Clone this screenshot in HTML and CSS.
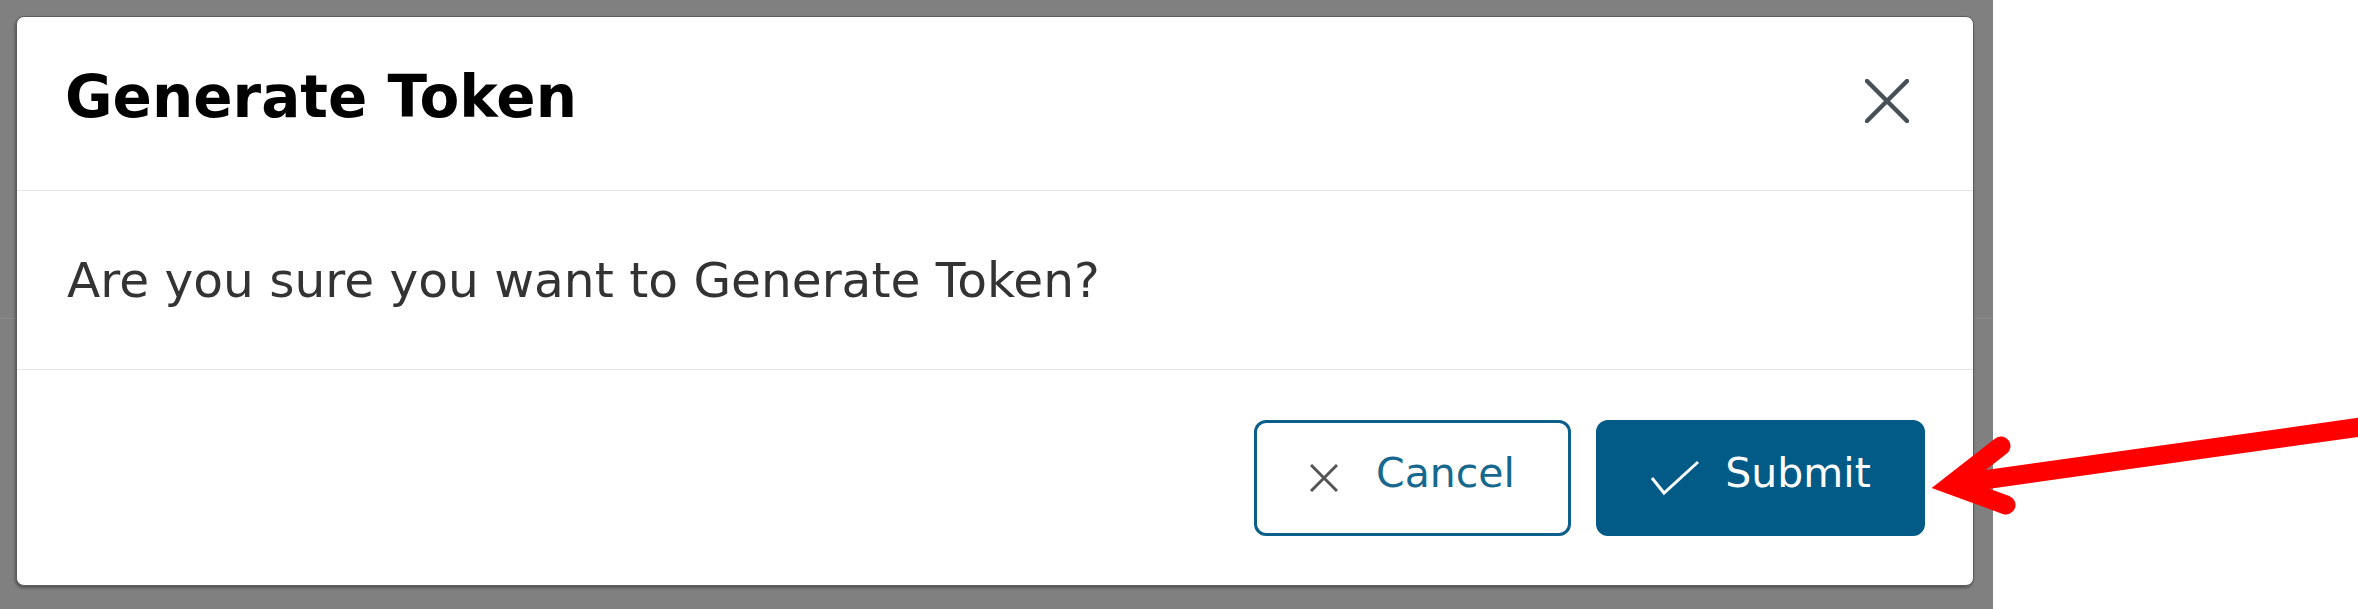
FILE: index.html
```html
<!DOCTYPE html>
<html lang="en">
<head>
  <meta charset="UTF-8">
  <meta name="viewport" content="width=device-width, initial-scale=1.0">
  <title>Generate Token</title>
  <link rel="stylesheet" href="styles.css">
</head>
<body>

  <div class="backdrop">
    <div class="modal">
      <div class="modal-header">
        <h2>Generate Token</h2>
        <button class="close-btn" aria-label="Close">
          <svg width="44" height="44" viewBox="0 0 44 44">
            <path d="M2 2 L42 42 M42 2 L2 42" stroke="#474f57" stroke-width="4.5" stroke-linecap="round" fill="none"/>
          </svg>
        </button>
      </div>

      <div class="modal-body">
        <p>Are you sure you want to Generate Token?</p>
      </div>

      <div class="modal-footer">
        <button class="btn btn-outline">
          <svg class="btn-icon" width="28" height="28" viewBox="0 0 28 28">
            <path d="M1 1 L27 27 M27 1 L1 27" stroke="#555" stroke-width="3" fill="none"/>
          </svg>
          <span>Cancel</span>
        </button>
        <button class="btn btn-primary">
          <svg class="btn-icon" width="50" height="36" viewBox="0 0 50 36">
            <path d="M2 18 L14 33 L48 2" stroke="#fff" stroke-width="3" fill="none"/>
          </svg>
          <span>Submit</span>
        </button>
      </div>
    </div>
  </div>

  <!-- red arrow pointing at submit -->
  <svg class="arrow" width="2358" height="609" viewBox="0 0 2358 609">
    <path d="M1955 484 L2375 425" stroke="#ff0000" stroke-width="19" fill="none"/>
    <path d="M2001 446 L1951 485 L2006 505" stroke="#ff0000" stroke-width="19" stroke-linecap="round" stroke-linejoin="miter" fill="none"/>
  </svg>

</body>
</html>
```

FILE: styles.css
```css
body {
  margin: 0;
  width: 2358px;
  height: 609px;
  background-color: #fff;
  font-family: "DejaVu Sans", Verdana, sans-serif;
  overflow: hidden;
  position: relative;
}

.backdrop {
  width: 1993px;
  height: 609px;
  padding-top: 16px;
  box-sizing: border-box;
  background: linear-gradient(#808080 0 318px, #8a8a8a 318px 319px, #808080 319px);
}

.modal {
  margin-left: 16px;
  width: 1958px;
  box-sizing: border-box;
  background-color: #fff;
  border: 1px solid #5c5c5c;
  border-radius: 8px;
  box-shadow: -1px 2px 3px rgba(0, 0, 0, 0.35);
}

.modal-header {
  height: 174px;
  box-sizing: border-box;
  display: flex;
  align-items: center;
  justify-content: space-between;
  padding: 0 64px 13px 48px;
  border-bottom: 1px solid #e1e5ea;
}

.modal-header h2 {
  margin: 0;
  font-size: 58px;
  font-weight: bold;
  color: #000;
}

.close-btn {
  background: none;
  border: none;
  padding: 0;
  margin-top: 8px;
  display: flex;
  cursor: pointer;
}

.modal-body {
  height: 179px;
  box-sizing: border-box;
  display: flex;
  align-items: center;
  padding: 0 50px;
  border-bottom: 1px solid #e1e5ea;
}

.modal-body p {
  margin: 0;
  font-size: 48.6px;
  color: #333;
}

.modal-footer {
  height: 215px;
  box-sizing: border-box;
  display: flex;
  align-items: center;
  justify-content: flex-end;
  gap: 25px;
  padding: 0 48px;
}

.btn {
  height: 116px;
  display: flex;
  align-items: center;
  justify-content: center;
  padding: 0 0 10px;
  border-radius: 12px;
  font-family: "DejaVu Sans", Verdana, sans-serif;
  font-size: 41px;
  cursor: pointer;
  box-sizing: border-box;
}

.btn-icon {
  margin-top: 10px;
}

.btn-outline {
  width: 317px;
  gap: 38px;
  background-color: #fff;
  border: 3px solid #0d5f8b;
  color: #17688f;
}

.btn-primary {
  width: 329px;
  gap: 25px;
  background-color: #025a87;
  border: 3px solid #025a87;
  color: #fff;
}

.arrow {
  position: absolute;
  top: 0;
  left: 0;
  pointer-events: none;
}
```
